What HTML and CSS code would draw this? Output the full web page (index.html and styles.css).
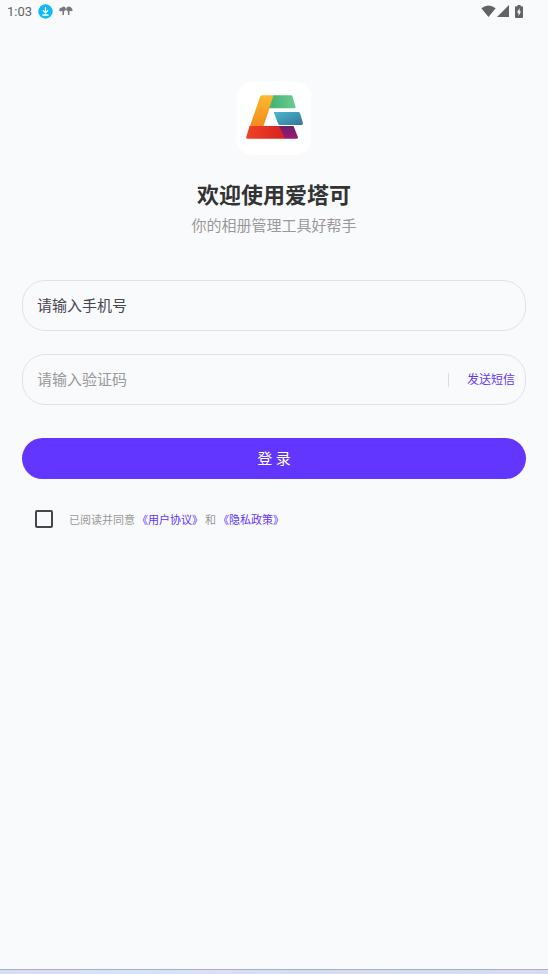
FILE: index.html
```html
<!DOCTYPE html>
<html lang="zh-CN">
<head>
<meta charset="utf-8">
<meta name="viewport" content="width=device-width, initial-scale=1">
<title>登录</title>
<link rel="stylesheet" href="styles.css">
</head>
<body>
<header class="status">
  <div class="status-group">
    <span class="clock">1:03</span>
    <svg width="15" height="15" viewBox="0 0 15 15" aria-hidden="true"><circle cx="7.500" cy="7.500" r="7.200" fill="#0bbcf9"/><path d="M7.500 3v5M5 6.300l2.500 2.500L10 6.300M4.500 11h6" fill="none" stroke="#fff" stroke-width="1.300"/></svg>
    <svg class="trees" width="14" height="10" viewBox="0 0 14 10" fill="#77787a" aria-hidden="true"><path d="M0 4.500 1 2l2-.5L4.500.5 6.600 1.500 7 4 5.500 4.800 5 5.200V9H3.500V5.300L2.500 4.800 1.500 5.500z"/><path d="M7 3.500 8 1.200 9.500.5l2 .5L13 2.500l.7 2-1.200.7L11 4.800l-.6.6V9H8.900V5L8 4.800z"/></svg>
  </div>
  <div class="status-group system">
    <svg width="15" height="12" viewBox="0 0 15 12" fill="#626365" aria-hidden="true"><path d="M.3 3.200Q7.500-2.400 14.700 3.200L7.500 12z"/></svg>
    <svg width="12" height="12" viewBox="0 0 12 12" fill="#626365" aria-hidden="true"><path d="M12 0v12H0z"/></svg>
    <svg class="battery" width="8" height="13" viewBox="0 0 8 13" aria-hidden="true"><path d="M2.500 0h3v1.200H7q1 0 1 1V12q0 1-1 1H1q-1 0-1-1V2.200q0-1 1-1h1.500z" fill="#626365"/><path d="M4.600 3 2 7.500h1.500V11L6 6.600H4.600z" fill="#fff"/></svg>
  </div>
</header>
<main class="page">
  <div class="logo">
    <svg width="58" height="44" viewBox="0 0 58 44" role="img" aria-label="爱塔可">
      <defs>
        <linearGradient id="yellow" x1="0" y1="0" x2="0" y2="1"><stop stop-color="#fbb92f"/><stop offset="1" stop-color="#f28b1c"/></linearGradient>
        <linearGradient id="green"><stop stop-color="#3fb36f"/><stop offset="1" stop-color="#6ccb92"/></linearGradient>
        <linearGradient id="blue" x1="0" y1="0" x2="1" y2="1"><stop stop-color="#4db8cb"/><stop offset="1" stop-color="#32759b"/></linearGradient>
        <linearGradient id="red"><stop stop-color="#ef4328"/><stop offset="1" stop-color="#d7211f"/></linearGradient>
        <linearGradient id="purple" x1="0" y1="0" x2="0" y2="1"><stop stop-color="#64206f"/><stop offset="1" stop-color="#a3156f"/></linearGradient>
      </defs>
      <path d="M16.500.3H29L18.500 31H5L15 2Q15.500.3 16.500.3z" fill="url(#yellow)"/>
      <path d="M28.500.3H46Q47 .3 47.500 1.500L50.500 11.500Q51 13.300 49.500 13.300H24.300z" fill="url(#green)"/>
      <path d="M29.500 17H53Q54.500 17 55 18L57.900 28Q58 30 56.500 30H35Q33.500 30 33 28.500L29 18Q28.500 17 29.500 17z" fill="url(#blue)"/>
      <path d="M4.500 31H34.500L40 43.700H2.500Q.8 43.700 1.300 42z" fill="url(#red)"/>
      <path d="M34 31H48.500L52.900 42Q53.300 43.700 51.800 43.700H39.700z" fill="url(#purple)"/>
    </svg>
  </div>
  <h1 class="title">欢迎使用爱塔可</h1>
  <p class="subtitle">你的相册管理工具好帮手</p>
  <form class="form">
    <div class="field">
      <input class="text-input phone" type="tel" aria-label="手机号" placeholder="请输入手机号">
    </div>
    <div class="field">
      <input class="text-input" type="text" inputmode="numeric" aria-label="验证码" placeholder="请输入验证码">
      <button class="send" type="button">发送短信</button>
    </div>
    <button class="submit" type="submit">登 录</button>
    <div class="terms">
      <input class="check" id="agree" type="checkbox">
      <label for="agree">已阅读并同意</label>
      <a href="#terms">《用户协议》</a>
      <label for="agree">和</label>
      <a href="#privacy">《隐私政策》</a>
    </div>
  </form>
</main>
<footer class="nav-edge"></footer>
</body>
</html>
```
FILE: styles.css
```css
* {
  box-sizing: border-box;
}

body {
  display: flex;
  flex-direction: column;
  min-height: 100vh;
  margin: 0;
  background: #f9fafc;
  font-family: "Noto Sans CJK SC", sans-serif;
}

button,
input {
  margin: 0;
  padding: 0;
  border: 0;
  background: none;
  font-family: inherit;
}

.status {
  display: flex;
  justify-content: space-between;
  height: 22px;
  padding: 0 25px 0 7px;
}

.status-group {
  display: flex;
  align-items: center;
  gap: 6px;
}

.system {
  gap: 1px;
}

.battery {
  margin-left: 5px;
}

.clock {
  color: #626365;
  font-family: Roboto, sans-serif;
  font-size: 13px;
}

.page {
  flex: 1;
  display: flex;
  flex-direction: column;
  align-items: center;
  padding: 60px 22px 24px;
}

.logo {
  display: flex;
  align-items: center;
  justify-content: center;
  width: 74px;
  height: 73px;
  padding-bottom: 3px;
  border-radius: 15px;
  background: #fff;
}

.title {
  margin: 22px 0 0;
  color: #333;
  font-size: 22px;
  line-height: 32px;
  font-weight: 700;
}

.subtitle {
  margin: 5px 0 0;
  color: #999;
  font-size: 15px;
  line-height: 22px;
}

.form {
  width: 100%;
  margin-top: 44px;
}

.field {
  display: flex;
  align-items: center;
  height: 51px;
  margin-bottom: 23px;
  padding: 0 10px 0 14px;
  border: 1px solid #e2e2e6;
  border-radius: 23px;
}

.text-input {
  flex: 1;
  min-width: 0;
  height: 100%;
  padding-bottom: 2px;
  color: #49454f;
  font-size: 15px;
  outline: 0;
}

.text-input::placeholder {
  color: #999;
  opacity: 1;
}

.phone::placeholder {
  color: #49454f;
}

.send {
  height: 14px;
  padding: 0 0 2px 18px;
  border-left: 1px solid #dcdce0;
  color: #6236ff;
  font-size: 12px;
  line-height: 12px;
}

.submit {
  display: block;
  width: 100%;
  height: 41px;
  margin-top: 33px;
  padding-bottom: 2px;
  border-radius: 21px;
  background: #6236ff;
  color: #fff;
  font-size: 15px;
}

.terms {
  display: flex;
  align-items: center;
  gap: 2px;
  margin-top: 31px;
  padding-left: 13px;
  color: #999;
  font-size: 11px;
  line-height: 18px;
}

.check {
  appearance: none;
  width: 18px;
  height: 18px;
  margin-right: 14px;
  border: 2px solid #49454f;
  border-radius: 2px;
}

.check:checked {
  background: #6236ff;
}

.terms a {
  color: #6236ff;
  text-decoration: none;
}

.nav-edge {
  height: 5px;
  border-top: 1px solid #a9adbd;
  background: linear-gradient(90deg, #d5def3, #d5e2fc 25%, #d7dcf0 65%, #d3def5);
}
```
